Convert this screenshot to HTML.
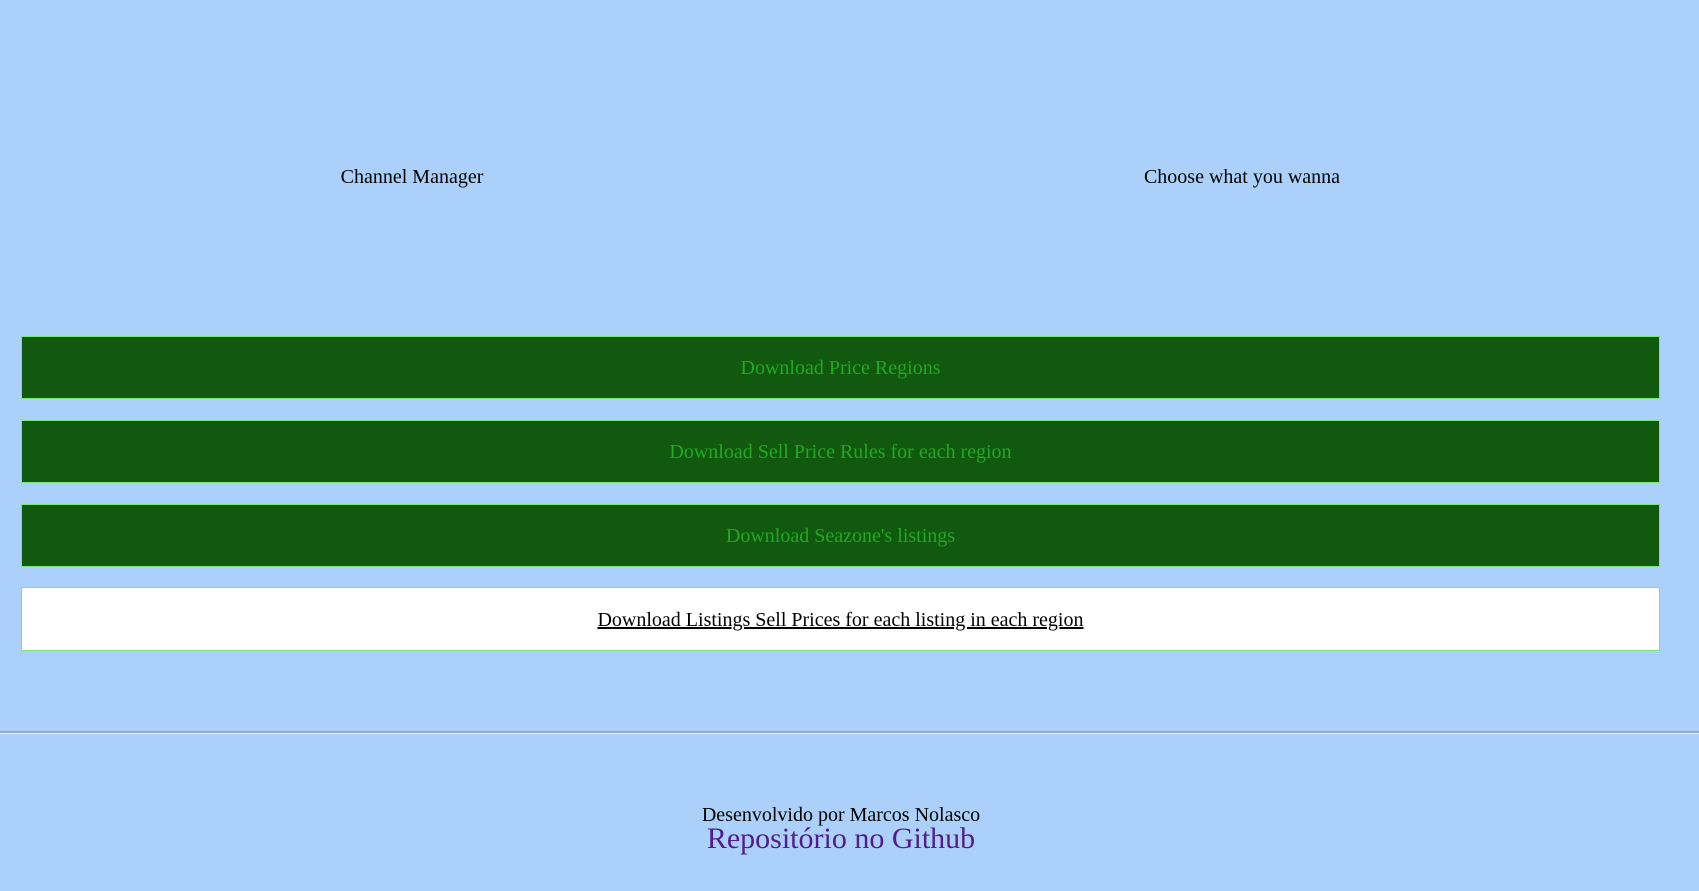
<!DOCTYPE html>
<html><head><meta charset="utf-8"><style>
*{font-family:"Liberation Serif","Times New Roman",serif}
html,body{margin:0;padding:0;background:#abd1fa;width:1699px;height:891px;overflow:hidden;font-size:20px;color:#000}
.t{position:absolute;top:166px;transform:translateX(-50%);white-space:nowrap}
.b{position:absolute;left:21px;width:1639px;box-sizing:border-box;border:1px solid #7be67b;background:#10590f;color:#22a822;text-align:center;display:flex;align-items:center;justify-content:center;padding-top:2px}
.w{background:#fff;color:#000;text-decoration:underline}
hr{position:absolute;top:731px;left:0;width:100%;margin:0;border:0;border-top:2px solid #9aaabc;border-bottom:1px solid #e8f0fa}
.f{position:absolute;left:0;width:1682px;text-align:center}
</style></head><body>
<div class="t" style="left:412px">Channel Manager</div>
<div class="t" style="left:1242px">Choose what you wanna</div>
<div class="b" style="top:336px;height:63px">Download Price Regions</div>
<div class="b" style="top:420px;height:63px">Download Sell Price Rules for each region</div>
<div class="b" style="top:504px;height:63px">Download Seazone's listings</div>
<div class="b w" style="top:587px;height:64px">Download Listings Sell Prices for each listing in each region</div>
<hr>
<div class="f" style="top:804px">Desenvolvido por Marcos Nolasco</div>
<div class="f" style="top:822px;font-size:30px;color:#551a8b">Repositório no Github</div>
</body></html>
